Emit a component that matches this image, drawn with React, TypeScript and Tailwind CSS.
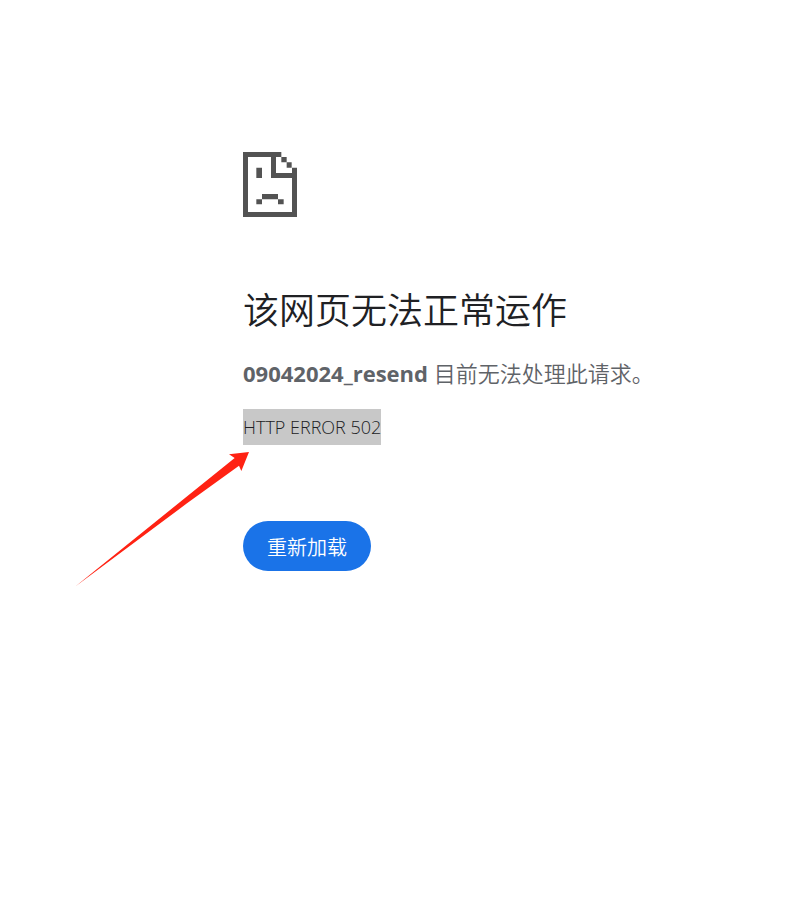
function SadPageIcon() {
  return (
    <svg viewBox="0 0 162 195" className="h-[65px] w-[54px] fill-[#535353]" aria-hidden="true">
      {/* Page outline */}
      <path d="M0 0H115V15H15V180H147V78H84V15H99V63H147V47H162V195H0Z" />
      {/* Folded corner */}
      <path d="M115 15H131V31H115ZM131 31H146V47H131Z" />
      {/* Face */}
      <path d="M40 47H57V78H40ZM57 126H105V142H57ZM40 142H57V157H40ZM105 142H122V157H105Z" />
    </svg>
  );
}

function Arrow() {
  return (
    <svg
      viewBox="0 0 522 405"
      className="absolute top-[452px] left-[75px] h-[135px] w-[174px] fill-[#ff2213]"
      aria-hidden="true"
    >
      <path d="M522 0L462 7L479 18L330 138L0 404L336 154L492 41L499 57Z" />
    </svg>
  );
}

export default function App() {
  return (
    <div className="relative min-h-screen bg-white font-['Open_Sans','Noto_Sans_CJK_SC',sans-serif]">
      <main className="flex flex-col items-start pt-[152px] pl-[243px]">
        <SadPageIcon />
        <h1 className="mt-[67px] font-['Noto_Sans_CJK_SC',sans-serif] text-[36px] leading-[48px] font-[350] whitespace-nowrap text-[#202124]">
          该网页无法正常运作
        </h1>
        <p className="mt-[23px] text-[22px] leading-[36px] whitespace-nowrap text-[#5f6368]">
          <strong className="font-bold">09042024_resend</strong>{" "}
          <span className="font-[350]">目前无法处理此请求。</span>
        </p>
        <div className="mt-[18px] bg-[#c8c8c8] text-[18px] leading-[36px] font-light whitespace-nowrap text-[#202124]">
          HTTP ERROR 502
        </div>
        <button
          type="button"
          className="mt-[76px] h-[50px] rounded-full bg-[#1a73e8] px-6 pt-1 text-[20px] leading-[46px] font-[350] whitespace-nowrap text-white"
        >
          重新加载
        </button>
      </main>
      <Arrow />
    </div>
  );
}
